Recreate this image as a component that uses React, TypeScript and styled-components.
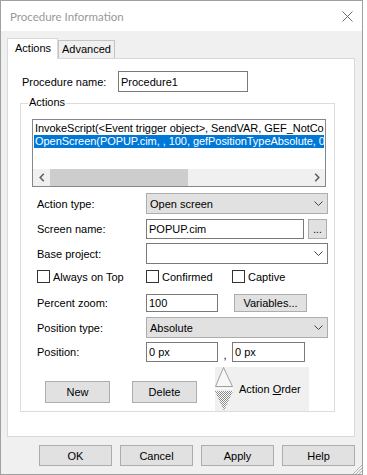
import React from "react";
import styled, { createGlobalStyle } from "styled-components";

const GlobalStyle = createGlobalStyle`
  html, body {
    margin: 0;
    padding: 0;
    background: #ffffff;
  }
  body {
    font-family: "Liberation Sans", Arial, sans-serif;
    font-size: 11px;
    color: #000000;
  }
`;

const Window = styled.div`
  position: relative;
  box-sizing: border-box;
  width: 363px;
  height: 475px;
  border: 1px solid #a0a0a0;
  display: flex;
  flex-direction: column;
`;

const TitleBar = styled.div`
  box-sizing: border-box;
  height: 30px;
  padding: 0 9px;
  display: flex;
  align-items: center;
  justify-content: space-between;
  background: #ffffff;
`;

const Title = styled.span`
  font-family: Lato, "Noto Sans", sans-serif;
  font-size: 11.5px;
  color: #999999;
`;

const Body = styled.div`
  flex: 1;
  min-height: 0;
  background: #f0f0f0;
  padding: 7px 7px 0 6px;
  display: flex;
  flex-direction: column;
`;

const TabStrip = styled.div`
  position: relative;
  z-index: 1;
  display: flex;
  align-items: flex-end;
  height: 21px;
  margin-bottom: -1px;
`;

const Tab = styled.div<{ $active?: boolean }>`
  box-sizing: border-box;
  border: 1px solid ${(p) => (p.$active ? "#d9d9d9" : "#c4c4c4")};
  border-bottom: none;
  background: ${(p) => (p.$active ? "#ffffff" : "#f0f0f0")};
  width: ${(p) => (p.$active ? 51 : 57)}px;
  height: ${(p) => (p.$active ? 21 : 18)}px;
  margin-bottom: ${(p) => (p.$active ? 0 : 1)}px;
  padding: ${(p) => (p.$active ? "3px 0 0 7px" : "2px 0 0 3px")};
  line-height: 13px;
`;

const Panel = styled.div`
  flex: 1;
  box-sizing: border-box;
  background: #ffffff;
  border: 1px solid #d9d9d9;
  padding: 12px 0 0 12px;
`;

const ProcRow = styled.div`
  display: flex;
  align-items: center;
  height: 21px;
  padding-left: 2px;
`;

const FieldLabel = styled.span<{ $w: number }>`
  width: ${(p) => p.$w}px;
  flex: none;
`;

const TextBox = styled.div<{ $w: number; $h: number }>`
  box-sizing: border-box;
  width: ${(p) => p.$w}px;
  height: ${(p) => p.$h}px;
  border: 1px solid #7a7a7a;
  background: #ffffff;
  padding-left: 2px;
  display: flex;
  align-items: center;
  white-space: nowrap;
`;

const GroupBox = styled.div`
  position: relative;
  box-sizing: border-box;
  width: 315px;
  margin-top: 11px;
  border: 1px solid #dcdcdc;
  padding: 15px 0 0 11px;
`;

const GroupLegend = styled.span`
  position: absolute;
  top: -8px;
  left: 7px;
  padding: 0 1px;
  line-height: 13px;
  background: #ffffff;
`;

const ListBox = styled.div`
  box-sizing: border-box;
  width: 294px;
  height: 68px;
  border: 1px solid #828790;
  background: #ffffff;
  display: flex;
  flex-direction: column;
`;

const ListItems = styled.div`
  flex: 1;
  padding-top: 2px;
  overflow: hidden;
`;

const ListItem = styled.div<{ $selected?: boolean }>`
  height: 13px;
  line-height: 13px;
  margin: 0 1px;
  padding-left: 1px;
  white-space: nowrap;
  overflow: hidden;
  letter-spacing: -0.05px;
  background: ${(p) => (p.$selected ? "#0078d7" : "transparent")};
  color: ${(p) => (p.$selected ? "#ffffff" : "#000000")};
`;

const HScroll = styled.div`
  height: 17px;
  display: flex;
  background: #f0f0f0;
`;

const ScrollButton = styled.div`
  width: 17px;
  flex: none;
  display: flex;
  align-items: center;
  justify-content: center;
`;

const ScrollTrack = styled.div`
  flex: 1;
  display: flex;
`;

const Thumb = styled.div`
  width: 138px;
  background: #cdcdcd;
`;

const FormRow = styled.div<{ $mt: number; $h: number; $cols?: string }>`
  display: grid;
  grid-template-columns: ${(p) => p.$cols ?? "109px auto"};
  align-items: center;
  margin-top: ${(p) => p.$mt}px;
  height: ${(p) => p.$h}px;
  padding-left: 5px;
`;

const Combo = styled.div<{ $gray?: boolean }>`
  box-sizing: border-box;
  width: 182px;
  height: 21px;
  border: 1px solid ${(p) => (p.$gray ? "#adadad" : "#7a7a7a")};
  background: ${(p) => (p.$gray ? "#e1e1e1" : "#ffffff")};
  padding: 0 4px 0 3px;
  display: flex;
  align-items: center;
  justify-content: space-between;
`;

const Controls = styled.div`
  display: flex;
  align-items: center;
`;

const Button = styled.div<{ $w: number; $h: number }>`
  box-sizing: border-box;
  width: ${(p) => p.$w}px;
  height: ${(p) => p.$h}px;
  flex: none;
  border: 1px solid #adadad;
  background: #e1e1e1;
  display: flex;
  align-items: center;
  justify-content: center;
`;

const SideButton = styled(Button)`
  margin-left: 4px;
  align-items: flex-end;
  padding-bottom: 3px;
  font-size: 10px;
`;

const VarButton = styled(Button)`
  margin-left: 16px;
`;

const CheckItem = styled.label`
  display: flex;
  align-items: center;
  gap: 3px;
`;

const CheckBox = styled.span`
  box-sizing: border-box;
  width: 13px;
  height: 13px;
  border: 1px solid #333333;
  background: #ffffff;
`;

const Comma = styled.span`
  width: 14px;
  text-align: center;
  align-self: flex-end;
  line-height: 13px;
`;

const ButtonRow = styled.div`
  display: flex;
  align-items: flex-start;
  margin-top: 5px;
  height: 44px;
  padding-left: 13px;
`;

const RowButton = styled(Button)<{ $ml: number }>`
  margin-top: 14px;
  margin-left: ${(p) => p.$ml}px;
`;

const ActionOrder = styled.div`
  margin-left: 18px;
  width: 94px;
  height: 44px;
  background: #f0f0f0;
  display: flex;
  align-items: center;
  gap: 6px;
`;

const Footer = styled.div`
  box-sizing: border-box;
  height: 37px;
  padding-top: 8px;
  display: flex;
  justify-content: flex-end;
  align-items: flex-start;
  gap: 8px;
`;

const Grip = styled.svg`
  position: absolute;
  right: 0;
  bottom: 0;
`;

const Chevron = () => (
  <svg width="9" height="5" viewBox="0 0 9 5">
    <polyline points="0.5,0.5 4.5,4.5 8.5,0.5" fill="none" stroke="#444" strokeWidth="1" />
  </svg>
);

const ArrowIcon = ({ dir }: { dir: "left" | "right" }) => (
  <svg width="6" height="9" viewBox="0 0 6 9">
    <polyline
      points={dir === "left" ? "4.8,0.8 1.2,4.5 4.8,8.2" : "1.2,0.8 4.8,4.5 1.2,8.2"}
      fill="none"
      stroke="#606060"
      strokeWidth="1.6"
    />
  </svg>
);

const OrderArrows = () => (
  <svg width="18" height="44" viewBox="0 0 18 44">
    <defs>
      <pattern id="dither" width="2" height="2" patternUnits="userSpaceOnUse">
        <rect width="2" height="2" fill="#ffffff" />
        <rect width="1" height="1" fill="#8c8c8c" />
        <rect x="1" y="1" width="1" height="1" fill="#8c8c8c" />
      </pattern>
    </defs>
    <polygon points="8.5,0.5 0.5,19.5 17.5,19.5" fill="#f7f7f7" stroke="#a0a0a0" strokeWidth="1" />
    <line x1="0" y1="21.5" x2="18" y2="21.5" stroke="#ffffff" strokeWidth="1" />
    <polygon points="0,24 18,24 9,44" fill="url(#dither)" />
  </svg>
);

const App: React.FC = () => {
  return (
    <>
      <GlobalStyle />
      <Window>
        <TitleBar>
          <Title>Procedure Information</Title>
          <svg width="11" height="11" viewBox="0 0 11 11">
            <path d="M0.5 0.5 L10.5 10.5 M10.5 0.5 L0.5 10.5" stroke="#707070" strokeWidth="1" />
          </svg>
        </TitleBar>
        <Body>
          <TabStrip>
            <Tab $active>Actions</Tab>
            <Tab>Advanced</Tab>
          </TabStrip>
          <Panel>
            <ProcRow>
              <FieldLabel $w={96}>Procedure name:</FieldLabel>
              <TextBox $w={130} $h={21}>Procedure1</TextBox>
            </ProcRow>
            <GroupBox>
              <GroupLegend>Actions</GroupLegend>
              <ListBox>
                <ListItems>
                  <ListItem>InvokeScript(&lt;Event trigger object&gt;, SendVAR, GEF_NotConfirmed)</ListItem>
                  <ListItem $selected>OpenScreen(POPUP.cim, , 100, gefPositionTypeAbsolute, 0, 0)</ListItem>
                </ListItems>
                <HScroll>
                  <ScrollButton>
                    <ArrowIcon dir="left" />
                  </ScrollButton>
                  <ScrollTrack>
                    <Thumb />
                  </ScrollTrack>
                  <ScrollButton>
                    <ArrowIcon dir="right" />
                  </ScrollButton>
                </HScroll>
              </ListBox>

              <FormRow $mt={6} $h={21}>
                <span>Action type:</span>
                <Combo $gray>
                  <span>Open screen</span>
                  <Chevron />
                </Combo>
              </FormRow>

              <FormRow $mt={5} $h={20}>
                <span>Screen name:</span>
                <Controls>
                  <TextBox $w={158} $h={20}>POPUP.cim</TextBox>
                  <SideButton $w={19} $h={20}>...</SideButton>
                </Controls>
              </FormRow>

              <FormRow $mt={4} $h={21}>
                <span>Base project:</span>
                <Combo>
                  <span />
                  <Chevron />
                </Combo>
              </FormRow>

              <FormRow $mt={6} $h={13} $cols="109px 86px auto">
                <CheckItem>
                  <CheckBox />
                  Always on Top
                </CheckItem>
                <CheckItem>
                  <CheckBox />
                  Confirmed
                </CheckItem>
                <CheckItem>
                  <CheckBox />
                  Captive
                </CheckItem>
              </FormRow>

              <FormRow $mt={11} $h={18}>
                <span>Percent zoom:</span>
                <Controls>
                  <TextBox $w={72} $h={18}>100</TextBox>
                  <VarButton $w={73} $h={18}>Variables...</VarButton>
                </Controls>
              </FormRow>

              <FormRow $mt={5} $h={21}>
                <span>Position type:</span>
                <Combo $gray>
                  <span>Absolute</span>
                  <Chevron />
                </Combo>
              </FormRow>

              <FormRow $mt={4} $h={20}>
                <span>Position:</span>
                <Controls>
                  <TextBox $w={72} $h={20}>0 px</TextBox>
                  <Comma>,</Comma>
                  <TextBox $w={73} $h={20}>0 px</TextBox>
                </Controls>
              </FormRow>

              <ButtonRow>
                <RowButton $w={65} $h={22} $ml={0}>New</RowButton>
                <RowButton $w={65} $h={22} $ml={22}>Delete</RowButton>
                <ActionOrder>
                  <OrderArrows />
                  <span>
                    Action <u>O</u>rder
                  </span>
                </ActionOrder>
              </ButtonRow>
            </GroupBox>
          </Panel>
          <Footer>
            <Button $w={73} $h={21}>OK</Button>
            <Button $w={73} $h={21}>Cancel</Button>
            <Button $w={73} $h={21}>Apply</Button>
            <Button $w={73} $h={21}>Help</Button>
          </Footer>
        </Body>
        <Grip width="10" height="10" viewBox="0 0 10 10">
          <path d="M10 1 L1 10 M10 4 L4 10 M10 7 L7 10" stroke="#b8b8b8" strokeWidth="1" />
        </Grip>
      </Window>
    </>
  );
};

export default App;
